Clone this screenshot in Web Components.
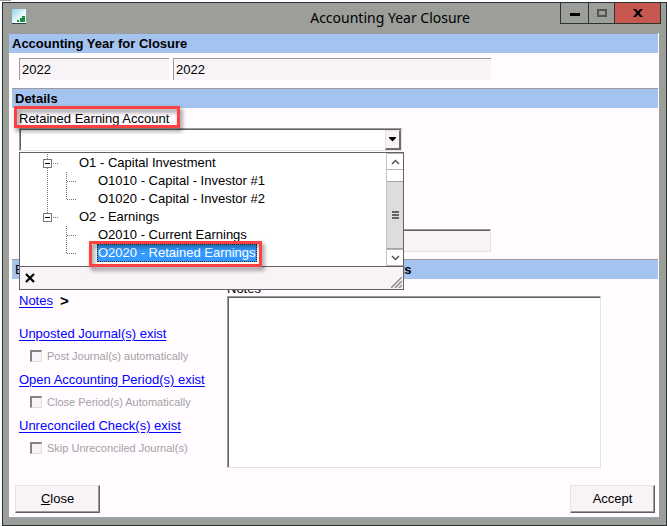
<!DOCTYPE html>
<html lang="en">
<head>
<meta charset="utf-8">
<title>Accounting Year Closure</title>
<style>
  html { height: 100%; }
  body {
    margin: 0; box-sizing: border-box; min-height: 100%; display: flex; flex-direction: column;
    padding: 2px 0 0 2px; color: #000;
    background: linear-gradient(#9b9e99, #9b9e99) 0 0 / 11px 1px no-repeat #fdfdff;
    font: 13px/18px "Liberation Sans", Arial, sans-serif;
  }
</style>
</head>
<body>
<app-window></app-window>

<script>
const BOX = '*, *::before, *::after { box-sizing: border-box; }';

function define(name, css, html, setup) {
  const template = document.createElement('template');
  template.innerHTML = `<style>:host { box-sizing: border-box; }${BOX}${css}</style>${html}`;
  customElements.define(name, class extends HTMLElement {
    constructor() {
      super();
      this.attachShadow({ mode: 'open' }).appendChild(template.content.cloneNode(true));
    }
    connectedCallback() { if (setup) setup(this.shadowRoot, this); }
  });
}

/* Title bar with the app icon, the caption and the window buttons */
define('title-bar', `
  :host { display: flex; align-items: flex-start; height: 30px; padding: 0 5px 0 9px; }
  .icon { margin: 6px 0 0; width: 14px; height: 15px; display: block; }
  .caption { flex: 1; margin: 0; padding: 0 90px 0 0; text-align: right; white-space: nowrap;
    font: 14px/30px "Noto Sans", "Open Sans", sans-serif; }
  .buttons { display: flex; border: 1px solid #2d3331; border-top: 0; height: 21px; }
  button { display: block; border: 0; margin: 0; padding: 0; background: #9b9e99; width: 27px; height: 20px; }
  button + button { border-left: 1px solid #2d3331; }
  button.max { width: 26px; }
  button.close { width: 46px; background: #c75850; }
  svg { display: block; margin: auto; }
`, `
  <svg class="icon" viewBox="0 0 14 15" shape-rendering="crispEdges">
    <defs><linearGradient id="g" x1="0" y1="0" x2="1" y2="1"><stop offset="0" stop-color="#8ed1ee"/><stop offset=".6" stop-color="#effaff"/><stop offset="1" stop-color="#fff"/></linearGradient></defs>
    <rect y="14" width="14" height="1" fill="#36413e"/>
    <rect width="14" height="14" fill="url(#g)"/>
    <path d="M5 11h2v2H5zM8 9h2v4H8zM10 7h3v6h-3z" fill="#159447"/>
  </svg>
  <h1 class="caption"><slot></slot></h1>
  <div class="buttons">
    <button aria-label="Minimize"><svg width="10" height="16"><path d="M0 8h10v3H0z"/></svg></button>
    <button class="max" aria-label="Maximize"><svg width="10" height="16" shape-rendering="crispEdges"><path d="M1 5h8v6H1z" fill="none" stroke="#555" stroke-width="2"/></svg></button>
    <button class="close" aria-label="Close window"><svg width="10" height="16"><path d="M0 4h3l2 2.5L7 4h3L6.500 8 10 12H7L5 9.500 3 12H0l3.500-4z"/></svg></button>
  </div>
`);

/* Blue heading band */
define('section-band', `
  :host { display: flex; height: 20px; background: #a5c3ef; border-top: 1px solid #9c9aa0; padding: 0 3px;
    font: bold 13px/19px "Liberation Sans", Arial, sans-serif; }
  h2 { font: inherit; margin: 0; display: flex; flex: 1; }
`, `<h2><slot></slot></h2>`);

define('readonly-field', `
  :host { display: block; }
  input { display: block; width: 100%; height: 22px; margin: 0; padding: 0 2px; border: 0; border-radius: 0;
    border-top: 1px solid #9c9a9c; border-left: 1px solid #9c9a9c; background: #f7f3f7; color: #000; outline: 0;
    font: 13px/20px "Liberation Sans", Arial, sans-serif; }
  :host([sunken]) input { border: 1px solid #e4e2e4; border-top-color: #9c9a9c; box-shadow: inset 0 1px #636163; height: 23px; }
`, `<input readonly>`, (root, host) => {
  const input = root.querySelector('input');
  input.value = host.getAttribute('value') || '';
  input.setAttribute('aria-label', host.getAttribute('label'));
});

/* Red call-out frame laid over whatever it wraps */
define('call-out', `
  :host { display: inline-block; position: relative; z-index: 5; }
  i { position: absolute; z-index: 5; inset: -4px -11px 0 -5px; border: 3px solid #fb4141; pointer-events: none;
    filter: drop-shadow(2px 3px 2px rgba(0,0,0,.5)); }
  :host([tight]) i { inset: -3px -5px -5px -8px; }
`, `<slot></slot><i></i>`);

define('tree-row', `
  :host { display: flex; align-items: stretch; height: 18px; white-space: nowrap; }
  svg { flex: none; display: block; }
  .parent { display: none; }
  :host([parent]) .parent { display: block; }
  :host([parent]) .leaf { display: none; }
  span { padding: 0 1px; line-height: 18px; }
`, `
  <svg class="parent" width="58" height="18" shape-rendering="crispEdges">
    <path class="up" d="M27.500 0v6" stroke="#777" stroke-dasharray="1 1"/>
    <path class="down" d="M27.500 14v4" stroke="#777" stroke-dasharray="1 1"/>
    <path d="M33 9.500h6" stroke="#777" stroke-dasharray="1 1"/>
    <rect x="23.500" y="5.500" width="8" height="8" fill="#fff" stroke="#777"/><path d="M25 9.500h5" stroke="#000"/>
  </svg>
  <svg class="leaf" width="77" height="18" shape-rendering="crispEdges">
    <path class="trunk" d="M27.500 0v18" stroke="#777" stroke-dasharray="1 1"/>
    <path class="top" d="M46.500 0v10" stroke="#777" stroke-dasharray="1 1"/>
    <path class="more" d="M46.500 10v8" stroke="#777" stroke-dasharray="1 1"/>
    <path d="M47 9.500h10" stroke="#777" stroke-dasharray="1 1"/>
  </svg>
  <slot name="frame"></slot><span><slot></slot></span>
`, (root, host) => {
  host.setAttribute('role', 'treeitem');
  if (host.hasAttribute('last')) root.querySelectorAll('.down, .more').forEach(n => n.remove());
  if (host.hasAttribute('end')) root.querySelectorAll('.trunk').forEach(n => n.remove());
});

/* Combo box with its open tree list */
define('tree-combo', `
  :host { display: block; position: relative; width: 385px; }
  label { display: block; width: max-content; height: 18px; line-height: 17px; }
  mark { display: block; height: 18px; line-height: 18px; padding: 0 1px; background: #3399ff; color: #fff; outline: 1px dotted #3a2a10; outline-offset: -1px; }
  .box { display: flex; height: 23px; margin-right: 2px; background: #fff; border: 1px solid #9c9a9c; border-right-color: #e4e2e4; border-bottom-color: #e4e2e4; box-shadow: inset 1px 1px #636163; padding: 1px 0 0 1px; }
  input { flex: 1; min-width: 0; border: 0; padding: 0 3px; background: none; outline: 0; font: inherit; }
  .open { width: 16px; padding: 0; background: #f7f3f7; border: 1px solid #e4e2e4; border-right: 2px solid #6e6c6e; border-bottom: 2px solid #6e6c6e; }
  .open svg { display: block; margin: auto; }
  .popup { position: absolute; z-index: 3; left: 0; right: 0; top: 42px; border: 1px solid #636163; background: #f7f3f7; }
  .view { display: flex; background: #fff; height: 113px; }
  .tree { flex: 1; padding-top: 1px; }
  .bar { width: 17px; display: flex; flex-direction: column; border: 1px solid #c5c3c5; border-width: 0 0 0 1px; }
  .bar button { flex: none; height: 17px; width: 100%; padding: 0; background: #fff; border: 1px solid #b5b3b5; border-width: 1px 0; }
  .bar svg { display: block; margin: auto; }
  .track { flex: 1; display: flex; flex-direction: column; padding-top: 11px; }
  .thumb { flex: 1; display: flex; align-items: center; background: #dedcde; border: 1px solid #a5a3a5; border-width: 1px 0; }
  .foot { display: flex; justify-content: space-between; border-top: 1px solid #636163; height: 23px; }
  .foot button { border: 0; background: none; padding: 0 0 0 5px; display: flex; align-items: center; }
  .grip { align-self: flex-end; margin: 0 1px 1px 0; }
`, `
  <call-out><label for="account">Retained Earning Account</label></call-out>
  <div class="box"><input id="account" type="text" role="combobox" aria-expanded="true">
    <button class="open" aria-label="Open list"><svg width="7" height="5"><path d="M0 0h7v1L3.500 4.500 0 1z"/></svg></button></div>
  <div class="popup">
    <div class="view">
      <div class="tree" role="tree" aria-label="Accounts">
        <tree-row parent>O1 - Capital Investment</tree-row>
        <tree-row>O1010 - Capital - Investor #1</tree-row>
        <tree-row last>O1020 - Capital - Investor #2</tree-row>
        <tree-row parent last>O2 - Earnings</tree-row>
        <tree-row end>O2010 - Current Earnings</tree-row>
        <tree-row end last aria-selected="true"><call-out tight slot="frame"><mark>O2020 - Retained Earnings</mark></call-out></tree-row>
      </div>
      <div class="bar">
        <button aria-label="Scroll up"><svg width="9" height="6"><path d="M1 5l3.500-3.500L8 5" fill="none" stroke="#555" stroke-width="1.500"/></svg></button>
        <div class="track"><div class="thumb"><svg width="7" height="8" shape-rendering="crispEdges"><path d="M0 0h7v2H0zM0 3h7v2H0zM0 6h7v2H0z" fill="#666"/></svg></div></div>
        <button aria-label="Scroll down"><svg width="9" height="6"><path d="M1 1l3.500 3.500L8 1" fill="none" stroke="#555" stroke-width="1.500"/></svg></button>
      </div>
    </div>
    <div class="foot">
      <button aria-label="Close list"><svg width="11" height="10"><path d="M1 1l8 8M9 1L1 9" stroke="#000" stroke-width="2.200"/></svg></button>
      <svg class="grip" width="11" height="11"><path d="M0 11L11 0M4 11l7-7M8 11l3-3" stroke="#8c8a8c" stroke-width="1.500"/></svg>
    </div>
  </div>
`);

/* Link to a failed check, with its optional automatic fix */
define('check-item', `
  :host { display: block; height: 46px; }
  a { display: block; width: max-content; height: 18px; line-height: 18px; color: #00f; text-decoration: underline; text-underline-offset: 2px; }
  label { display: flex; align-items: center; gap: 5px; margin: 6px 0 0 11px; height: 14px; color: #a3a1a3; font-size: 11px; line-height: 14px; white-space: nowrap; }
  input { appearance: none; margin: 0; width: 12px; height: 12px; background: #f7f3f7; border: 1px solid #dedcde; border-top: 2px solid #848284; border-left: 2px solid #848284; }
`, `<a href="#"><slot></slot></a><label><input type="checkbox" disabled><slot name="option"></slot></label>`);

define('notes-box', `
  :host { display: flex; flex-direction: column; }
  label { height: 15px; line-height: 15px; }
  textarea { display: block; height: 172px; width: 100%; margin: 0; padding: 2px 3px; resize: none; outline: 0; background: #fff; border-radius: 0;
    border: 1px solid #e4e2e4; border-top-color: #9c9a9c; border-left-color: #9c9a9c; box-shadow: inset 1px 1px #636163; font: inherit; }
`, `<label for="n">Notes</label><textarea id="n"></textarea>`);

define('push-button', `
  :host { display: block; }
  button { display: block; width: 85px; height: 28px; padding: 0; color: #000; background: #f7f3f7; border: 1px solid #e4e2e4;
    border-right-color: #636163; border-bottom-color: #636163; box-shadow: inset -1px -1px #9c9a9c; font: inherit; }
`, `<button><slot></slot></button>`);

define('app-window', `
  :host { flex: 1; display: flex; flex-direction: column; background: #9b9e99; border: 1px solid #2b3230; }
  main { flex: 1; display: flex; flex-direction: column; margin: 0 7px 7px 6px; padding-right: 1px; background: #fffbff; border-bottom: 1px solid #9ca4b5; }
  .years { display: grid; grid-template-columns: 150px 1fr; gap: 4px; padding: 5px 167px 8px 10px; }
  .inset { margin-left: 3px; }
  .details { padding: 2px 0 0 7px; height: 151px; display: flex; flex-direction: column; justify-content: space-between; margin-left: 3px; }
  .more { width: 472px; margin-bottom: 7px; }
  .split { display: grid; grid-template-columns: 208px 1fr; padding: 2px 57px 0 10px; }
  nav { padding-top: 11px; }
  .notes { display: flex; gap: 7px; height: 33px; }
  .notes a { color: #00f; text-underline-offset: 2px; height: 18px; }
  .notes b { font-size: 15px; }
  footer { display: flex; justify-content: space-between; margin-top: auto; padding: 0 3px 4px 6px; }
  .e { font-weight: normal; flex: none; width: 385px; }
`, `
  <title-bar>Accounting Year Closure</title-bar>
  <main>
    <section-band>Accounting Year for Closure</section-band>
    <div class="years"><readonly-field label="Year" value="2022"></readonly-field><readonly-field label="Description" value="2022"></readonly-field></div>
    <section-band class="inset">Details</section-band>
    <div class="details">
      <tree-combo></tree-combo>
      <readonly-field class="more" sunken label="Account description"></readonly-field>
    </div>
    <section-band class="inset"><span class="e">E</span><span>ts</span></section-band>
    <div class="split">
      <nav>
        <div class="notes"><a href="#">Notes</a><b>&gt;</b></div>
        <check-item>Unposted Journal(s) exist<span slot="option">Post Journal(s) automatically</span></check-item>
        <check-item>Open Accounting Period(s) exist<span slot="option">Close Period(s) Automatically</span></check-item>
        <check-item>Unreconciled Check(s) exist<span slot="option">Skip Unreconciled Journal(s)</span></check-item>
      </nav>
      <notes-box></notes-box>
    </div>
    <footer><push-button><u>C</u>lose</push-button><push-button>Accept</push-button></footer>
  </main>
`);
</script>
</body>
</html>
